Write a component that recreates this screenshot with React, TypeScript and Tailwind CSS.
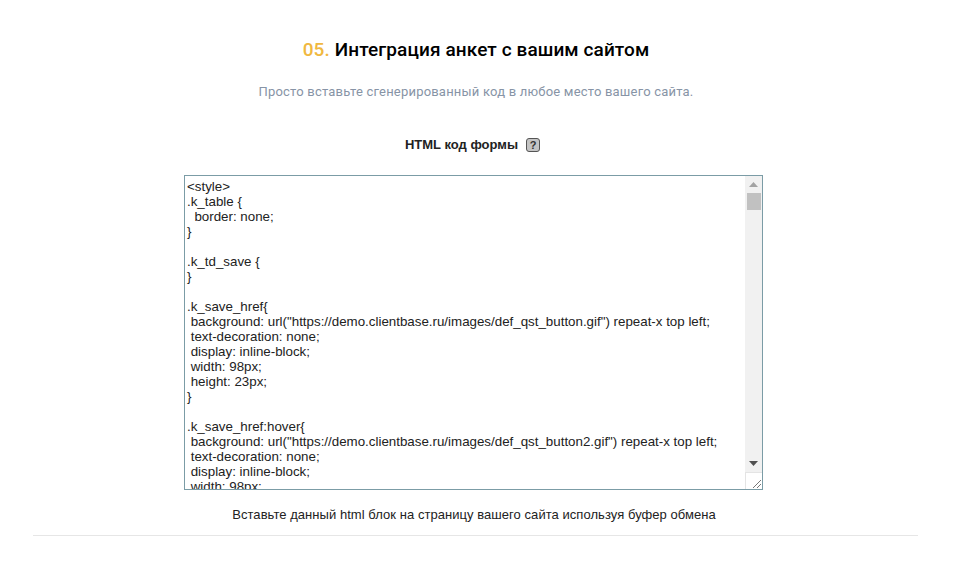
const code = `<style>
.k_table {
  border: none;
}

.k_td_save {
}

.k_save_href{
 background: url("https://demo.clientbase.ru/images/def_qst_button.gif") repeat-x top left;
 text-decoration: none;
 display: inline-block;
 width: 98px;
 height: 23px;
}

.k_save_href:hover{
 background: url("https://demo.clientbase.ru/images/def_qst_button2.gif") repeat-x top left;
 text-decoration: none;
 display: inline-block;
 width: 98px;`;

export default function App() {
  return (
    <div className="w-[965px] h-[586px] bg-white overflow-hidden">
      <div className="w-[948px] flex flex-col items-center font-['Liberation_Sans',sans-serif]">
        {/* Header */}
        <h1 className="mt-[38px] ml-[4px] h-[24px] leading-[24px] text-[19px] font-medium tracking-[0.1px] text-black font-['Roboto',sans-serif]">
          <span className="text-[#f0b840]">05.</span> Интеграция анкет с вашим сайтом
        </h1>
        <p className="mt-[20px] ml-[4px] h-[20px] leading-[20px] text-[13px] text-[#8794a6] font-['Roboto',sans-serif] tracking-[0.2px]">
          Просто вставьте сгенерированный код в любое место вашего сайта.
        </p>

        <div className="mt-[33px] mr-[3px] h-[20px] flex items-center gap-[8px]">
          <span className="text-[13px] font-bold text-[#222]">HTML код формы</span>
          <span className="w-[14px] h-[14px] rounded-[3px] border border-[#555] bg-[#c4c4c4] text-[11px] leading-[12px] font-bold text-[#333] text-center">?</span>
        </div>

        {/* Code box */}
        <div className="mt-[20px] mr-[1px] w-[579px] h-[315px] flex border border-[#7b9ca6] bg-white overflow-hidden">
          <pre className="flex-1 pl-[2px] pt-[3px] text-[13.33px] leading-[15px] text-[#222] font-['Liberation_Sans',sans-serif] overflow-hidden">{code}</pre>
          <div className="w-[17px] flex flex-col bg-[#f1f1f1]">
            <div className="h-[17px] flex items-center justify-center">
              <svg width="9" height="5" viewBox="0 0 9 5"><path d="M4.5 0L9 5H0z" fill="#a3a3a3" /></svg>
            </div>
            <div className="h-[17px] ml-[2px] mr-[1px] bg-[#c1c1c1]" />
            <div className="flex-1" />
            <div className="h-[17px] flex items-center justify-center">
              <svg width="9" height="5" viewBox="0 0 9 5"><path d="M0 0H9L4.5 5z" fill="#505050" /></svg>
            </div>
            <div className="h-[17px] bg-white border-t border-l border-[#e4e4e4] flex items-end justify-end">
              <svg width="12" height="12" viewBox="0 0 12 12"><path d="M3 11L11 3M7 11L11 7" stroke="#777" strokeWidth="1" /></svg>
            </div>
          </div>
        </div>

        <p className="mt-[17px] h-[16px] leading-[16px] text-[13px] text-[#222] tracking-[0.05px]">
          Вставьте данный html блок на страницу вашего сайта используя буфер обмена
        </p>
        <div className="mt-[12px] ml-[3px] w-[885px] h-px bg-[#e6e6e6]" />
      </div>
    </div>
  );
}
